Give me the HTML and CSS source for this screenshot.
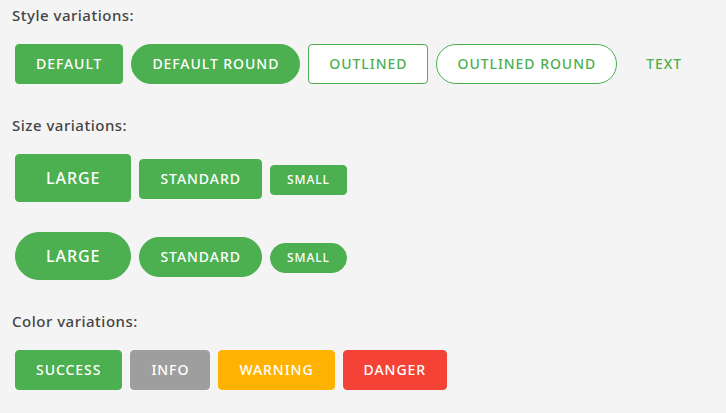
FILE: index.html
```html
<!DOCTYPE html>
<html>
<head>
<meta charset="utf-8">
<link rel="stylesheet" href="styles.css">
</head>
<body>
  <section class="section">
    <h3 class="title">Style variations:</h3>
    <div class="row">
      <button class="btn">Default</button>
      <button class="btn round">Default round</button>
      <button class="btn outline">Outlined</button>
      <button class="btn outline round">Outlined round</button>
      <button class="btn text">Text</button>
    </div>
  </section>
  <section class="section">
    <h3 class="title">Size variations:</h3>
    <div class="row row-tight">
      <button class="btn large">Large</button>
      <button class="btn">Standard</button>
      <button class="btn small">Small</button>
    </div>
    <div class="row">
      <button class="btn large round">Large</button>
      <button class="btn round">Standard</button>
      <button class="btn small round">Small</button>
    </div>
  </section>
  <section class="section">
    <h3 class="title">Color variations:</h3>
    <div class="row">
      <button class="btn">Success</button>
      <button class="btn info">Info</button>
      <button class="btn warning">Warning</button>
      <button class="btn danger">Danger</button>
    </div>
  </section>
</body>
</html>
```
FILE: styles.css
```css
html, body {
  margin: 0;
  background: #f4f4f4;
}
body {
  padding: 5px 12px 0;
  font-family: "Noto Sans", "Open Sans", sans-serif;
}
.title {
  margin: 0 0 19px;
  font-size: 15px;
  line-height: 20px;
  font-weight: 500;
  letter-spacing: 0.5px;
  color: #444444;
}
.row {
  display: flex;
  align-items: baseline;
  gap: 8px;
  padding-left: 3px;
  margin-bottom: 31px;
}
.row-tight {
  margin-bottom: 30px;
}
.btn {
  display: inline-flex;
  align-items: center;
  justify-content: center;
  box-sizing: border-box;
  height: 40px;
  padding: 0 20px;
  border: 1px solid #4caf50;
  border-radius: 4px;
  background: #4caf50;
  color: #ffffff;
  font-family: inherit;
  font-size: 14px;
  font-weight: 500;
  line-height: 1;
  letter-spacing: 0.95px;
  text-transform: uppercase;
  white-space: nowrap;
}
.round {
  border-radius: 999px;
}
.outline {
  background: #ffffff;
  color: #4caf50;
}
.text {
  background: transparent;
  border-color: transparent;
  color: #4caf50;
}
.large {
  height: 48px;
  padding: 0 30px;
  font-size: 16px;
}
.small {
  height: 30px;
  padding: 0 16px;
  font-size: 12px;
}
.info {
  background: #9e9e9e;
  border-color: #9e9e9e;
}
.warning {
  background: #ffb300;
  border-color: #ffb300;
}
.danger {
  background: #f44336;
  border-color: #f44336;
}
```
